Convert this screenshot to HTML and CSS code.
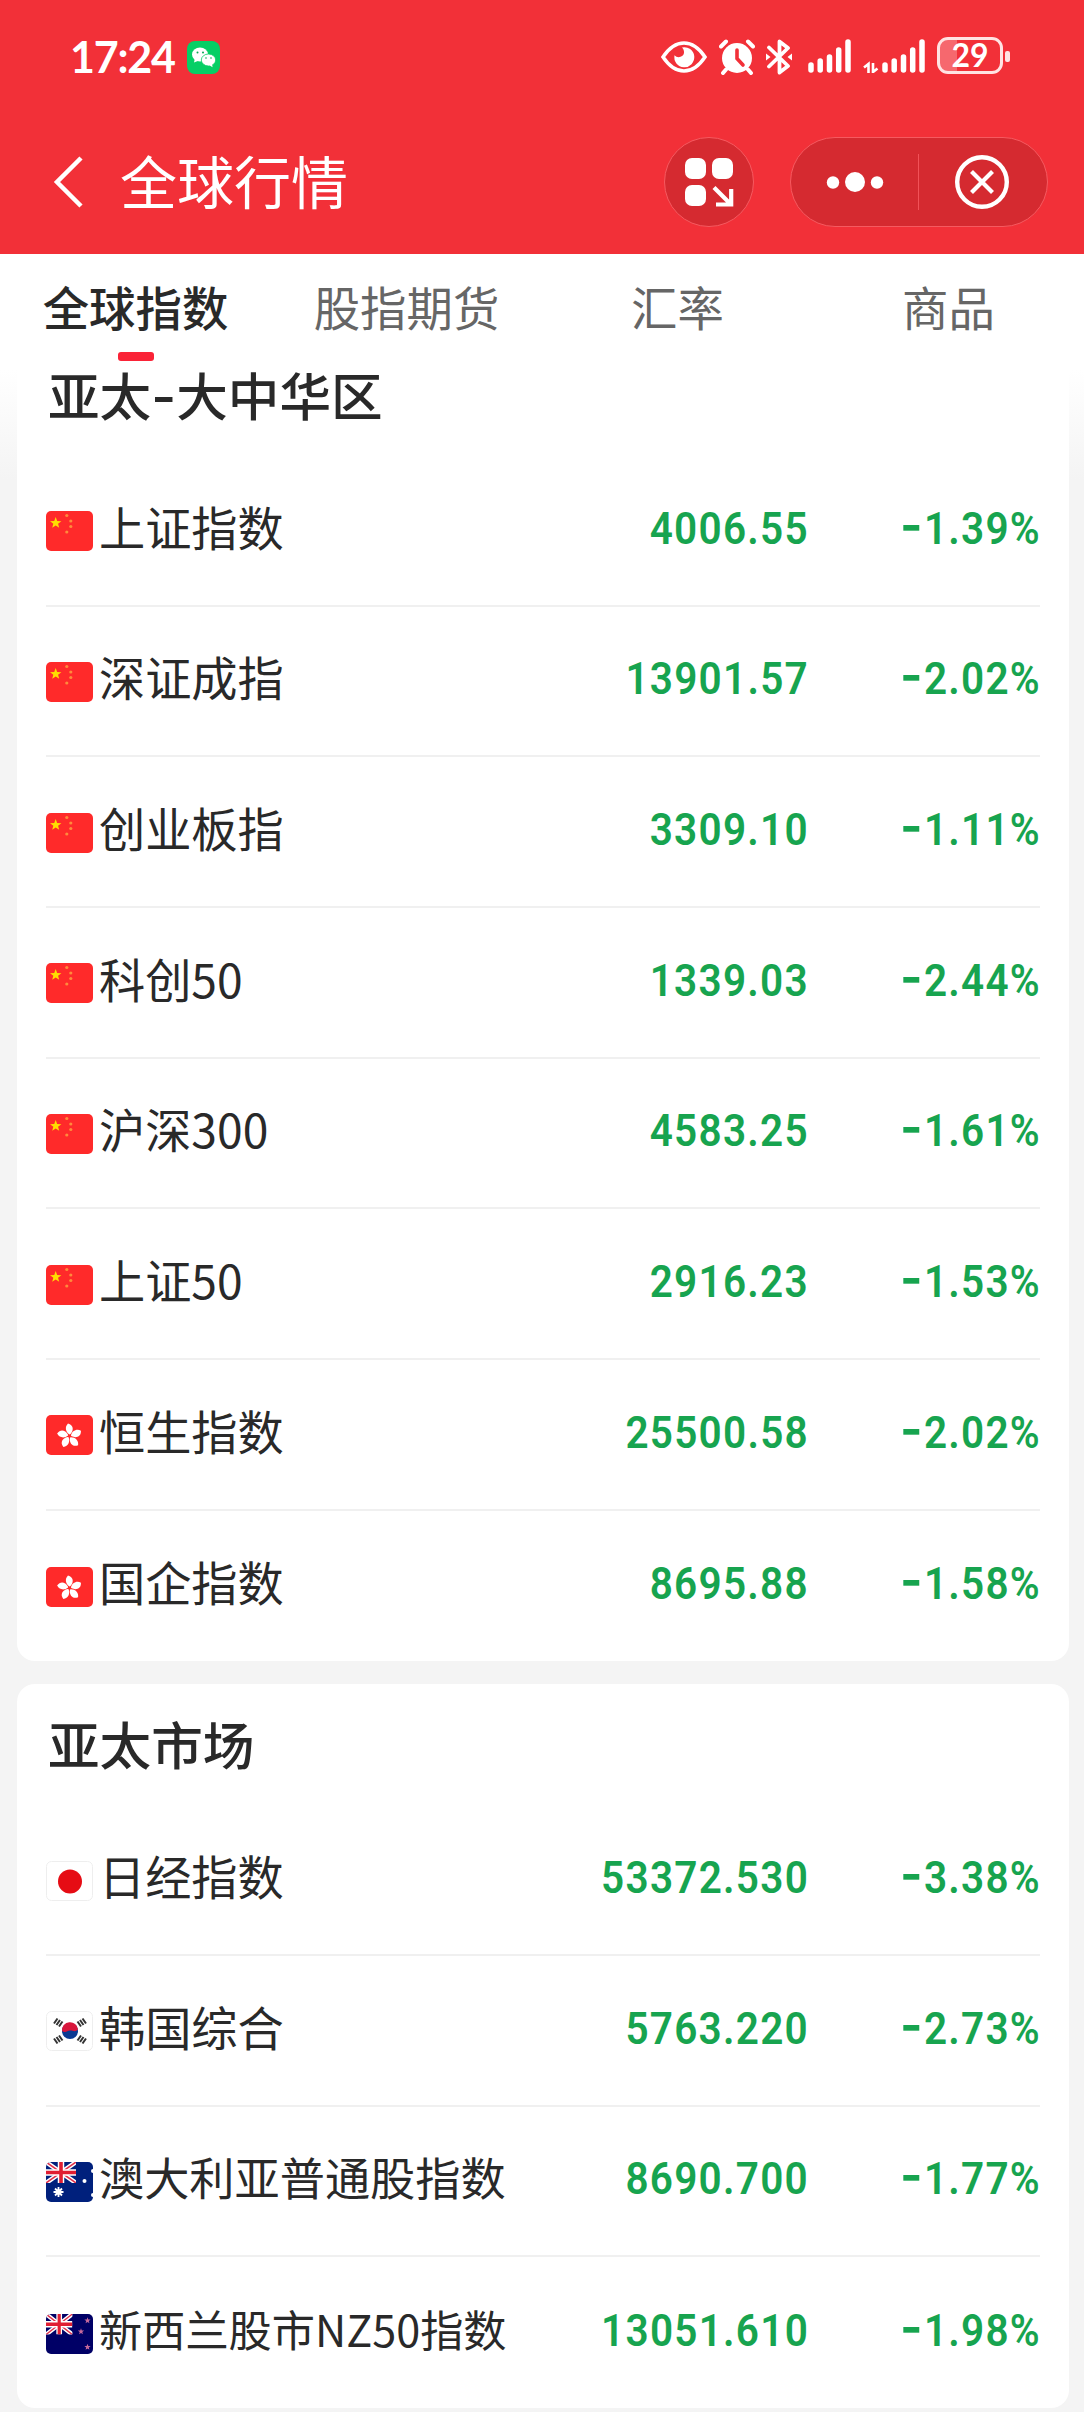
FILE: index.html
```html
<!DOCTYPE html>
<html lang="zh-CN">
<head>
    <meta charset="UTF-8">
    <meta name="viewport" content="width=device-width, initial-scale=1.0">
    <title>全球行情</title>
    <link rel="stylesheet" href="styles.css">
</head>
<body>
    <!-- flags and shared shapes -->
    <svg class="defs" width="0" height="0">
        <defs>
            <clipPath id="round"><rect width="47" height="40" rx="5"/></clipPath>
            <clipPath id="jack-clip"><rect width="30" height="21"/></clipPath>
            <path id="star" d="M0-6 1.45-2 5.7-1.85 2.35.75 3.5 4.85 0 2.5-3.5 4.85-2.35.75-5.7-1.85-1.45-2z"/>
            <path id="petal" d="M0-1.5C-4-4-5-9-1.500-12.5 4-11 4.500-6 1-2z"/>
            <g id="jack" clip-path="url(#jack-clip)">
                <path d="M0 0 30 21M30 0 0 21" stroke="#fff" stroke-width="4.5"/>
                <path d="M0 0 30 21M30 0 0 21" stroke="#e0304a" stroke-width="1.5"/>
                <path d="M15 0V21M0 10.5H30" stroke="#fff" stroke-width="6.5"/>
                <path d="M15 0V21M0 10.5H30" stroke="#e01e32" stroke-width="3.6"/>
            </g>
            <symbol id="cn" viewBox="0 0 47 40">
                <rect width="47" height="40" rx="5" fill="#ff2a2a"/>
                <use href="#star" x="9.7" y="12" fill="#ffde00"/>
                <g fill="#ff8a3c">
                    <circle cx="20.8" cy="4.5" r="1.6"/>
                    <circle cx="24.8" cy="10" r="1.6"/>
                    <circle cx="24.8" cy="15.5" r="1.6"/>
                    <circle cx="20.8" cy="21" r="1.6"/>
                </g>
            </symbol>
            <symbol id="hk" viewBox="0 0 47 40">
                <rect width="47" height="40" rx="5" fill="#ff2a2a"/>
                <g fill="#fff" transform="translate(23.5 21)">
                    <use href="#petal"/>
                    <use href="#petal" transform="rotate(72)"/>
                    <use href="#petal" transform="rotate(144)"/>
                    <use href="#petal" transform="rotate(216)"/>
                    <use href="#petal" transform="rotate(288)"/>
                </g>
            </symbol>
            <symbol id="jp" viewBox="0 0 47 40">
                <rect x=".5" y=".5" width="46" height="39" rx="5" fill="#fff" stroke="#eee"/>
                <circle cx="24" cy="20.5" r="12" fill="#e60c14"/>
            </symbol>
            <symbol id="kr" viewBox="0 0 47 40">
                <rect x=".5" y=".5" width="46" height="39" rx="5" fill="#fff" stroke="#eee"/>
                <circle cx="24" cy="20" r="8" fill="#0b3a92"/>
                <path d="M16 20a8 8 0 0 1 16-1.500c-3 3-5 1-8 1s-4 3-8 .5z" fill="#d8163c"/>
                <g stroke="#333" stroke-width="2">
                    <path d="M8 12.500l3.500-5M10.500 14l3.500-5M13 15.500l3.500-5"/>
                    <path d="M31.500 10.500l3.500 5M34 9l3.500 5M36.500 7.500l3.500 5"/>
                    <path d="M8 27.500l3.500 5M10.500 26l3.500 5M13 24.500l3.500 5"/>
                    <path d="M31.500 29.500l3.500-5M34 31l3.500-5M36.500 32.500l3.500-5"/>
                </g>
            </symbol>
            <symbol id="au" viewBox="0 0 47 40">
                <g clip-path="url(#round)">
                    <rect width="47" height="40" fill="#00207c"/>
                    <use href="#jack"/>
                    <path d="M12.500 25V35M7.500 30H17.500M9 26.500l7 7M16 26.500l-7 7" stroke="#fff" stroke-width="1.800"/>
                    <g fill="#fff">
                        <circle cx="12.500" cy="30" r="2.800"/>
                        <circle cx="38.500" cy="19" r="2"/>
                        <circle cx="47" cy="9" r="2"/>
                        <circle cx="47" cy="33" r="2"/>
                    </g>
                </g>
            </symbol>
            <symbol id="nz" viewBox="0 0 47 40">
                <g clip-path="url(#round)">
                    <rect width="47" height="40" fill="#000066"/>
                    <use href="#jack" transform="scale(.88 .98)"/>
                    <g fill="#c86a9c">
                        <use href="#star" transform="translate(41.500 6.500) scale(.55)"/>
                        <use href="#star" transform="translate(35 17.500) scale(.55)"/>
                        <use href="#star" transform="translate(41.500 33) scale(.55)"/>
                    </g>
                </g>
            </symbol>
        </defs>
    </svg>

    <header>
        <div class="status">
            <span class="time">17:24</span>
            <svg class="wechat" width="33" height="33" viewBox="0 0 33 33">
                <rect width="33" height="33" rx="8" fill="#06cf65"/>
                <g fill="#fff">
                    <ellipse cx="13" cy="13.500" rx="8" ry="7"/>
                    <path d="M8 17l-1 4.500 5-2z"/>
                    <ellipse cx="21.500" cy="19" rx="7.200" ry="6" stroke="#06cf65" stroke-width=".8"/>
                    <path d="M22 24l3.500 2.200L25 22z"/>
                </g>
                <g fill="#06a552">
                    <circle cx="10.500" cy="11.500" r="1"/>
                    <circle cx="16" cy="11.500" r="1"/>
                    <circle cx="19" cy="17" r=".8"/>
                    <circle cx="24" cy="17" r=".8"/>
                </g>
            </svg>
            <div class="status-icons">
                <svg class="eye" width="46" height="34" viewBox="0 0 46 34">
                    <path d="M2 17C8 8 14 3 23 3s15 5 21 14c-6 9-12 14-21 14S8 26 2 17z" fill="none" stroke="#fff" stroke-width="3.500"/>
                    <path d="M21 7.500a10 10 0 1 1-7.500 7.800c3 3.500 9 1.700 9.500-2.300.2-2.500-.7-4.500-2-5.500z" fill="#fff"/>
                </svg>
                <svg class="alarm" width="36" height="36" viewBox="0 0 36 36">
                    <circle cx="18" cy="19" r="15" fill="#fff"/>
                    <path d="M2 7.500 7 2.500M34 7.500 29 2.500M7 30.500 4 34M29 30.500 32 34" stroke="#fff" stroke-width="4" stroke-linecap="round"/>
                    <path d="M18 11V19.500L24 26" fill="none" stroke="#f23038" stroke-width="3.600" stroke-linecap="round"/>
                </svg>
                <svg class="bt" width="26" height="36" viewBox="0 0 26 36">
                    <path d="M3 8.500 22 27 13.500 33.500V2.500L22 9 3 27.500" fill="none" stroke="#fff" stroke-width="3.800" stroke-linejoin="round" stroke-linecap="round"/>
                    <path d="M0 14.500 4.500 18 0 21.500zM26 14.500 21.500 18 26 21.500z" fill="#fff"/>
                </svg>
                <svg class="signal" width="43" height="34" viewBox="0 0 43 34">
                    <path d="M3 26V31M12.200 22V31M21.500 18V31M30.700 11V31M40 3V31" stroke="#fff" stroke-width="5.500" stroke-linecap="round"/>
                </svg>
                <svg class="signal2" width="62" height="34" viewBox="0 0 62 34">
                    <path d="M5.500 34V25L1 28.500M10 24V33L14.500 29.500" fill="none" stroke="#fff" stroke-width="2.600"/>
                    <path d="M22 26V31M31.200 22V31M40.500 18V31M49.700 11V31M59 3V31" stroke="#fff" stroke-width="5.500" stroke-linecap="round"/>
                </svg>
                <span class="battery">29</span>
                <span class="battery-tip"></span>
            </div>
        </div>
        <div class="nav">
            <svg class="back" width="30" height="52" viewBox="0 0 30 52">
                <path d="M28 2 4 26 28 50" fill="none" stroke="#fff" stroke-width="4.500"/>
            </svg>
            <h1>全球行情</h1>
            <span class="round-btn">
                <svg width="50" height="50" viewBox="0 0 50 50">
                    <g fill="#fff">
                        <rect x="1" y="1" width="21" height="21" rx="7"/>
                        <rect x="28" y="1" width="21" height="21" rx="7"/>
                        <rect x="1" y="28" width="21" height="21" rx="7"/>
                    </g>
                    <path d="M30 30.500 46 46.500M32 47.500H47.200V32" fill="none" stroke="#fff" stroke-width="4.200"/>
                </svg>
            </span>
            <span class="capsule">
                <svg width="58" height="22" viewBox="0 0 58 22" fill="#fff">
                    <circle cx="7" cy="11.500" r="6.200"/>
                    <circle cx="29" cy="11" r="10"/>
                    <circle cx="51" cy="11.500" r="6.200"/>
                </svg>
                <span class="divider"></span>
                <svg width="54" height="54" viewBox="0 0 54 54" fill="none" stroke="#fff">
                    <circle cx="27" cy="27" r="24.800" stroke-width="4.400"/>
                    <path d="M16.500 16.500 37.500 37.500M37.500 16.500 16.500 37.500" stroke-width="4.200"/>
                </svg>
            </span>
        </div>
    </header>

    <nav class="tabs">
        <span class="tab active">全球指数</span>
        <span class="tab">股指期货</span>
        <span class="tab">汇率</span>
        <span class="tab">商品</span>
    </nav>

    <main>
        <section class="card first">
            <h2>亚太<span class="minus">-</span>大中华区</h2>
            <div class="row">
                <svg class="flag"><use href="#cn"/></svg>
                <span class="name">上证指数</span>
                <span class="price">4006.55</span>
                <span class="change"><span class="minus">-</span>1.39%</span>
            </div>
            <div class="row">
                <svg class="flag"><use href="#cn"/></svg>
                <span class="name">深证成指</span>
                <span class="price">13901.57</span>
                <span class="change"><span class="minus">-</span>2.02%</span>
            </div>
            <div class="row">
                <svg class="flag"><use href="#cn"/></svg>
                <span class="name">创业板指</span>
                <span class="price">3309.10</span>
                <span class="change"><span class="minus">-</span>1.11%</span>
            </div>
            <div class="row">
                <svg class="flag"><use href="#cn"/></svg>
                <span class="name">科创50</span>
                <span class="price">1339.03</span>
                <span class="change"><span class="minus">-</span>2.44%</span>
            </div>
            <div class="row">
                <svg class="flag"><use href="#cn"/></svg>
                <span class="name">沪深300</span>
                <span class="price">4583.25</span>
                <span class="change"><span class="minus">-</span>1.61%</span>
            </div>
            <div class="row">
                <svg class="flag"><use href="#cn"/></svg>
                <span class="name">上证50</span>
                <span class="price">2916.23</span>
                <span class="change"><span class="minus">-</span>1.53%</span>
            </div>
            <div class="row">
                <svg class="flag"><use href="#hk"/></svg>
                <span class="name">恒生指数</span>
                <span class="price">25500.58</span>
                <span class="change"><span class="minus">-</span>2.02%</span>
            </div>
            <div class="row">
                <svg class="flag"><use href="#hk"/></svg>
                <span class="name">国企指数</span>
                <span class="price">8695.88</span>
                <span class="change"><span class="minus">-</span>1.58%</span>
            </div>
        </section>

        <section class="card">
            <h2>亚太市场</h2>
            <div class="row">
                <svg class="flag"><use href="#jp"/></svg>
                <span class="name">日经指数</span>
                <span class="price">53372.530</span>
                <span class="change"><span class="minus">-</span>3.38%</span>
            </div>
            <div class="row">
                <svg class="flag"><use href="#kr"/></svg>
                <span class="name">韩国综合</span>
                <span class="price">5763.220</span>
                <span class="change"><span class="minus">-</span>2.73%</span>
            </div>
            <div class="row">
                <svg class="flag"><use href="#au"/></svg>
                <span class="name long">澳大利亚普通股指数</span>
                <span class="price">8690.700</span>
                <span class="change"><span class="minus">-</span>1.77%</span>
            </div>
            <div class="row">
                <svg class="flag"><use href="#nz"/></svg>
                <span class="name longer">新西兰股市NZ50指数</span>
                <span class="price">13051.610</span>
                <span class="change"><span class="minus">-</span>1.98%</span>
            </div>
        </section>
    </main>
</body>
</html>
```
FILE: styles.css
```css
*{
    box-sizing: border-box;
}

body{
    margin: 0;
    width: 1084px;
    height: 2412px;
    overflow: hidden;
    background-color: #f4f4f4;
    color: #292929;
    font-family: "Noto Sans CJK SC", sans-serif;
}

h1, h2{
    margin: 0;
}

svg{
    flex: none;
    display: block;
}

.defs{
    position: absolute;
}

header{
    height: 254px;
    background-color: #f23038;
    color: white;
}

/* status bar */
.status{
    display: flex;
    align-items: center;
    height: 110px;
    padding: 4px 74px 0 70px;
}

.time{
    width: 117px;
    font-family: Lato, sans-serif;
    font-size: 43px;
    font-weight: 700;
    letter-spacing: -1.200px;
    line-height: 50px;
}

.status-icons{
    display: flex;
    align-items: center;
    margin-left: auto;
}

.alarm{
    margin-left: 12px;
}

.bt{
    margin-left: 11px;
}

.signal{
    margin-left: 16px;
    margin-top: -2px;
}

.signal2{
    margin-left: 12px;
    margin-top: -2px;
}

.battery{
    width: 66px;
    height: 37px;
    margin-left: 12px;
    margin-top: -3px;
    border: 3px solid #ffe3e3;
    border-radius: 11px;
    background: linear-gradient(90deg, #f6686e 29%, #f23038 29%);
    font-family: Lato, sans-serif;
    font-size: 32px;
    font-weight: 700;
    line-height: 30px;
    text-align: center;
}

.battery-tip{
    width: 5px;
    height: 11px;
    margin-left: 2px;
    margin-top: -2px;
    border-radius: 2px;
    background-color: #ffe3e3;
}

/* title bar */
.nav{
    display: flex;
    align-items: center;
    height: 144px;
    padding: 0 36px 0 53px;
}

h1{
    margin-left: 37px;
    margin-top: -6px;
    font-size: 57px;
    font-weight: 400;
    line-height: 80px;
}

.round-btn, .capsule{
    display: flex;
    align-items: center;
    height: 90px;
    border: 1.500px solid #f65a60;
    border-radius: 45px;
    background-color: #d52a30;
}

.round-btn{
    justify-content: center;
    width: 90px;
    margin-left: auto;
}

.capsule{
    width: 258px;
    margin-left: 36px;
    padding-left: 35px;
}

.divider{
    width: 1px;
    height: 56px;
    margin: 0 36px 0 34px;
    background-color: #f25258;
}

/* tabs */
.tabs{
    display: flex;
    height: 116px;
    background-color: white;
}

.tab{
    flex: 1;
    display: flex;
    flex-direction: column;
    align-items: center;
    padding-top: 18px;
    color: #666;
    font-size: 46.400px;
    font-weight: 400;
    line-height: 68px;
}

.active{
    color: #292929;
    font-weight: 500;
}

.active::after{
    content: "";
    width: 36px;
    height: 9px;
    margin-top: 12px;
    border-radius: 3px;
    background-color: #fa2337;
}

/* lists */
main{
    padding: 0 15px 4px 17px;
    background: linear-gradient(#fff, #f4f4f4 110px);
}

.card{
    margin-bottom: 23px;
    padding: 0 29px;
    border-radius: 18px;
    background-color: white;
}

h2{
    height: 121px;
    padding-left: 2px;
    font-size: 51.600px;
    font-weight: 500;
    line-height: 118px;
}

.first{
    border-radius: 0 0 18px 18px;
}

.first h2{
    height: 86px;
    line-height: 48px;
}

.row{
    display: flex;
    align-items: center;
    height: 150.670px;
    border-bottom: 2px solid #f0f0f0;
}

.row:last-child{
    border-bottom: none;
}

.flag{
    width: 47px;
    height: 40px;
    margin-top: 2px;
}

.name{
    margin-left: 6px;
    font-size: 46.200px;
    line-height: 68px;
    margin-top: -9px;
    white-space: nowrap;
}

.long{
    font-size: 45.200px;
    margin-top: -7px;
}

.longer{
    font-size: 43.200px;
    margin-top: -9px;
}

.price, .change{
    margin-top: -3px;
    margin-right: -1px;
    color: #17a44f;
    font-family: Roboto, sans-serif;
    font-size: 45px;
    font-weight: 600;
    letter-spacing: 1.400px;
    line-height: 60px;
    text-align: right;
    transform: scaleX(.9);
    transform-origin: right;
}

.price{
    margin-left: auto;
}

.change{
    width: 233px;
}

.minus{
    font-family: Inter, sans-serif;
    font-size: 54px;
    line-height: 0;
}
```
